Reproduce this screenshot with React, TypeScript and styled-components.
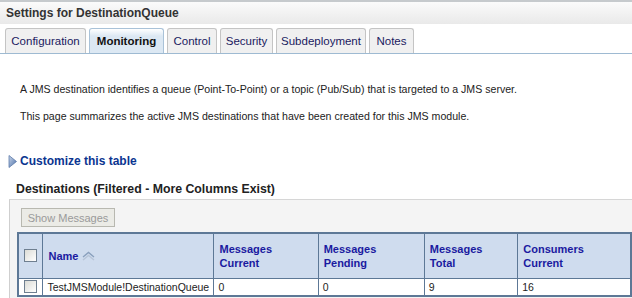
import styled, { createGlobalStyle } from 'styled-components';

const GlobalStyle = createGlobalStyle`
  html, body {
    margin: 0;
    padding: 0;
    background: #ffffff;
    font-family: "Liberation Sans", Arial, sans-serif;
    font-size: 11px;
    color: #222222;
  }
`;

const tabs = [
  { label: 'Configuration', width: 81 },
  { label: 'Monitoring', width: 75, active: true },
  { label: 'Control', width: 50 },
  { label: 'Security', width: 53 },
  { label: 'Subdeployment', width: 90 },
  { label: 'Notes', width: 45 },
];

const columns = [
  { title: 'Messages Current', width: 105 },
  { title: 'Messages Pending', width: 107 },
  { title: 'Messages Total', width: 94 },
  { title: 'Consumers Current', width: 114 },
];

const rows = [
  { name: 'TestJMSModule!DestinationQueue', values: ['0', '0', '9', '16'] },
];

const App = () => {
  return (
    <Page>
      <GlobalStyle />
      <TitleBar>Settings for DestinationQueue</TitleBar>
      <TabStrip>
        {tabs.map((t) => (
          <Tab key={t.label} $active={!!t.active} $width={t.width}>
            {t.label}
          </Tab>
        ))}
      </TabStrip>
      <Content>
        <Para>
          A JMS destination identifies a queue (Point-To-Point) or a topic (Pub/Sub) that is targeted to a JMS server.
        </Para>
        <Para>This page summarizes the active JMS destinations that have been created for this JMS module.</Para>
      </Content>
      <CustomizeLink>
        <svg width="9" height="13" viewBox="0 0 9 13">
          <defs>
            <linearGradient id="tri" x1="0" y1="0" x2="1" y2="1">
              <stop offset="0" stopColor="#c9d6ea" />
              <stop offset="1" stopColor="#4a6fa8" />
            </linearGradient>
          </defs>
          <path d="M1 0.5 L8.5 6.5 L1 12.5 Z" fill="url(#tri)" stroke="#5d7bab" strokeWidth="0.8" />
        </svg>
        Customize this table
      </CustomizeLink>
      <TableTitle>Destinations (Filtered - More Columns Exist)</TableTitle>
      <TablePanel>
        <Toolbar>
          <DisabledButton disabled>Show Messages</DisabledButton>
        </Toolbar>
        <Grid>
          <thead>
            <tr>
              <HeadCell $width={25}>
                <CheckBox />
              </HeadCell>
              <HeadCell $width={171}>
                <NameHead>
                  Name
                  <svg width="15" height="10" viewBox="0 0 15 10">
                    <path d="M2 6 L7.5 1.5 L13 6" fill="none" stroke="#8aa0bd" strokeWidth="1.4" />
                    <path d="M2 9 L7.5 4.5 L13 9" fill="none" stroke="#b7c5d8" strokeWidth="1.4" />
                  </svg>
                </NameHead>
              </HeadCell>
              {columns.map((c) => (
                <HeadCell key={c.title} $width={c.width}>
                  {c.title.split(' ').map((w) => (
                    <div key={w}>{w}</div>
                  ))}
                </HeadCell>
              ))}
            </tr>
          </thead>
          <tbody>
            {rows.map((r) => (
              <tr key={r.name}>
                <Cell>
                  <CheckBox />
                </Cell>
                <Cell>{r.name}</Cell>
                {r.values.map((v, i) => (
                  <Cell key={i}>{v}</Cell>
                ))}
              </tr>
            ))}
          </tbody>
        </Grid>
      </TablePanel>
    </Page>
  );
};

export default App;

const Page = styled.div`
  width: 632px;
  height: 298px;
  overflow: hidden;
`;

const TitleBar = styled.div`
  height: 22px;
  border-top: 2px solid #c6cacd;
  padding-left: 6px;
  display: flex;
  align-items: center;
  font-weight: bold;
  font-size: 12px;
  color: #333333;
  background: linear-gradient(#fbfbfb, #e9e9e9);
`;

const TabStrip = styled.div`
  display: flex;
  align-items: flex-end;
  gap: 3px;
  height: 27px;
  margin-top: 2px;
  padding-left: 5px;
  border-bottom: 1px solid #9ebad2;
`;

const Tab = styled.div<{ $active: boolean; $width: number }>`
  width: ${(p) => p.$width}px;
  height: 25px;
  box-sizing: border-box;
  display: flex;
  align-items: center;
  justify-content: center;
  border: 1px solid ${(p) => (p.$active ? '#a9c2d8' : '#c4c4c4')};
  border-bottom: none;
  border-radius: 3px 3px 0 0;
  background: ${(p) => (p.$active ? 'linear-gradient(#ffffff, #dce8f3 30%)' : '#f0f0f0')};
  font-size: 11.5px;
  font-weight: ${(p) => (p.$active ? 'bold' : 'normal')};
  color: ${(p) => (p.$active ? '#111111' : '#1a1a60')};
`;

const Content = styled.div`
  padding: 28px 0 0 20px;
`;

const Para = styled.p`
  margin: 0 0 13px 0;
  line-height: 14px;
  font-size: 10.6px;
  color: #222222;
`;

const CustomizeLink = styled.div`
  display: flex;
  align-items: center;
  gap: 3px;
  margin: 31px 0 0 8px;
  font-weight: bold;
  font-size: 12px;
  color: #0b3590;
`;

const TableTitle = styled.div`
  margin: 14px 0 0 16px;
  font-weight: bold;
  font-size: 12.3px;
  color: #222222;
`;

const TablePanel = styled.div`
  margin: 3px 0 0 9px;
  padding: 8px 0 0 7px;
  background: #f4f4f4;
  border-left: 1px solid #cfcfcf;
  border-top: 1px solid #d6d6d6;
  height: 120px;
`;

const Toolbar = styled.div`
  padding-left: 4px;
  margin-bottom: 5px;
`;

const DisabledButton = styled.button`
  height: 19px;
  width: 94px;
  padding: 0;
  font-family: "Liberation Sans", Arial, sans-serif;
  font-size: 11px;
  color: #9a9a9a;
  background: #ebebe6;
  border: 1px solid #b8b8b0;
  border-radius: 0;
`;

const Grid = styled.table`
  border-collapse: collapse;
  table-layout: fixed;
  background: #ffffff;
  border: 2px solid #5d7896;
`;

const HeadCell = styled.th<{ $width: number }>`
  width: ${(p) => p.$width}px;
  height: 45px;
  box-sizing: border-box;
  padding: 0 5px;
  text-align: left;
  vertical-align: middle;
  background: #cfdcee;
  border: 1px solid #5d7896;
  font-size: 11px;
  font-weight: bold;
  line-height: 14px;
  color: #1a1aa0;
`;

const NameHead = styled.div`
  display: flex;
  align-items: center;
  gap: 3px;
`;

const Cell = styled.td`
  height: 16px;
  padding: 0 4px;
  border: 1px solid #5d7896;
  font-size: 10.5px;
  color: #222222;
  white-space: nowrap;
`;

const CheckBox = styled.span`
  display: block;
  width: 11px;
  height: 11px;
  margin: 0 auto;
  border: 1px solid #6f7f90;
  background: linear-gradient(135deg, #dcdcd6, #ffffff);
`;
